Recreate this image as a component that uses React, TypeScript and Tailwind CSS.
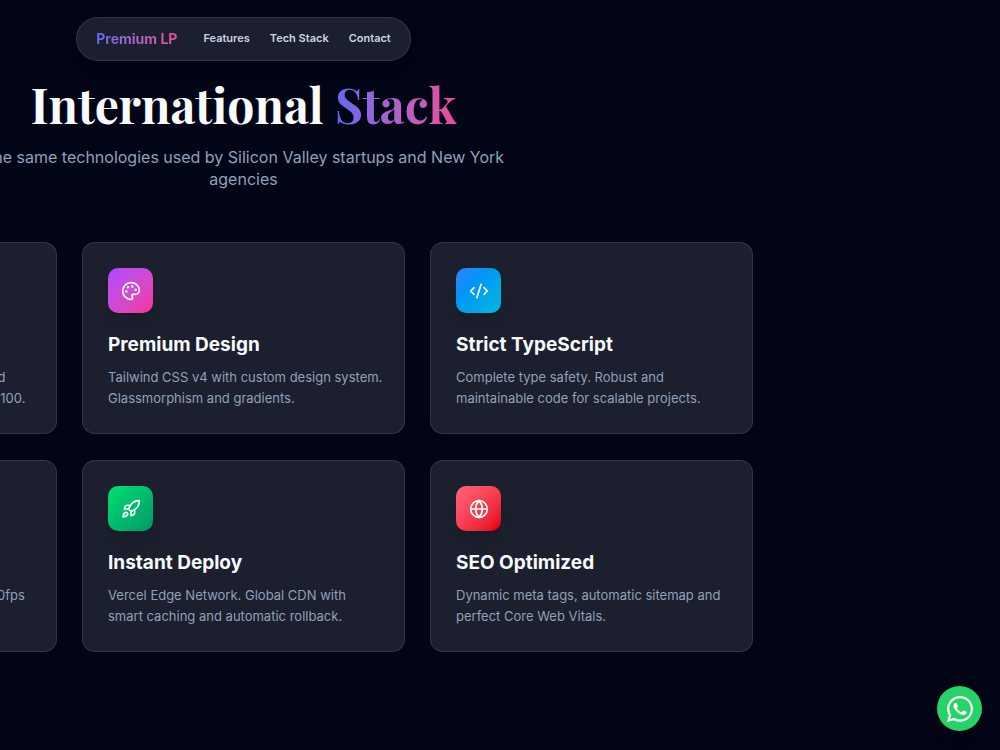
import type { ComponentType } from "react";
import { CodeXml, Globe, Palette, Rocket, Sparkles, Zap } from "lucide-react";
import { SiWhatsapp } from "react-icons/si";

type Feature = {
  title: string;
  lines: [string, string];
  icon: ComponentType<{ className?: string }>;
  gradient: string;
};

const features: Feature[] = [
  {
    title: "Performance",
    lines: ["Next.js 16 with Server Components, and", "optimized rendering. Lighthouse score 100."],
    icon: Zap,
    gradient: "from-yellow-400 to-orange-500",
  },
  {
    title: "Premium Design",
    lines: ["Tailwind CSS v4 with custom design system.", "Glassmorphism and gradients."],
    icon: Palette,
    gradient: "from-purple-500 to-pink-500",
  },
  {
    title: "Strict TypeScript",
    lines: ["Complete type safety. Robust and", "maintainable code for scalable projects."],
    icon: CodeXml,
    gradient: "from-blue-500 to-cyan-500",
  },
  {
    title: "Animations",
    lines: ["Framer Motion with fluid and smooth 60fps", "transitions and effects."],
    icon: Sparkles,
    gradient: "from-indigo-500 to-violet-500",
  },
  {
    title: "Instant Deploy",
    lines: ["Vercel Edge Network. Global CDN with", "smart caching and automatic rollback."],
    icon: Rocket,
    gradient: "from-green-400 to-emerald-600",
  },
  {
    title: "SEO Optimized",
    lines: ["Dynamic meta tags, automatic sitemap and", "perfect Core Web Vitals."],
    icon: Globe,
    gradient: "from-rose-400 to-red-600",
  },
];

function NavBar() {
  return (
    <nav className="flex h-11 items-center rounded-full border border-white/10 bg-[#1c1f2d] px-[19px] pb-px shadow-lg">
      <a
        href="#top"
        className="mr-[26px] bg-linear-to-r from-[#6366f1] to-[#ec4899] bg-clip-text text-[14px] font-bold text-transparent"
      >
        Premium LP
      </a>
      <div className="flex gap-5 text-[11px] font-semibold text-slate-300">
        <a href="#features">Features</a>
        <a href="#stack">Tech Stack</a>
        <a href="#contact">Contact</a>
      </div>
    </nav>
  );
}

function FeatureCard({ title, lines, icon: Icon, gradient }: Feature) {
  return (
    <article className="rounded-[13px] border border-white/10 bg-[#1c1f2d] p-[25px] pb-6">
      <div
        className={`mb-5 flex size-[45px] items-center justify-center rounded-[10px] bg-linear-to-br text-white shadow-lg ${gradient}`}
      >
        <Icon className="size-5" />
      </div>
      <h3 className="mb-2.5 text-[19px] leading-6 font-bold text-slate-50">{title}</h3>
      <p className="text-[13px] leading-[21px] whitespace-nowrap text-slate-400">
        {lines[0]}
        <br />
        {lines[1]}
      </p>
    </article>
  );
}

export default function App() {
  return (
    <div
      id="top"
      className="min-h-screen overflow-hidden bg-[#020516] font-['Inter','Liberation_Sans',sans-serif]"
    >
      <main className="-ml-[266px] flex w-[1019px] flex-col items-center pt-[17px] pb-24">
        <NavBar />
        <h1 className="mt-5 text-[48px] leading-[46px] font-bold whitespace-nowrap text-slate-50 font-['Playfair_Display','Liberation_Serif',serif]">
          International{" "}
          <span className="bg-linear-to-r from-[#6366f1] to-[#ec4899] bg-clip-text text-transparent">Stack</span>
        </h1>
        <p className="mt-[19px] max-w-[538px] text-center text-[16px] leading-[22px] text-slate-400">
          The same technologies used by Silicon Valley startups and New York agencies
        </p>
        <section id="features" className="mt-[52px] grid w-full grid-cols-3 gap-x-[25px] gap-y-[26px]">
          {features.map((feature) => (
            <FeatureCard key={feature.title} {...feature} />
          ))}
        </section>
      </main>
      <a
        href="#contact"
        aria-label="Chat on WhatsApp"
        className="fixed right-[18px] bottom-[19px] flex size-[45px] items-center justify-center rounded-full bg-[#25d366] text-white shadow-lg"
      >
        <SiWhatsapp className="size-[26px]" />
      </a>
    </div>
  );
}
